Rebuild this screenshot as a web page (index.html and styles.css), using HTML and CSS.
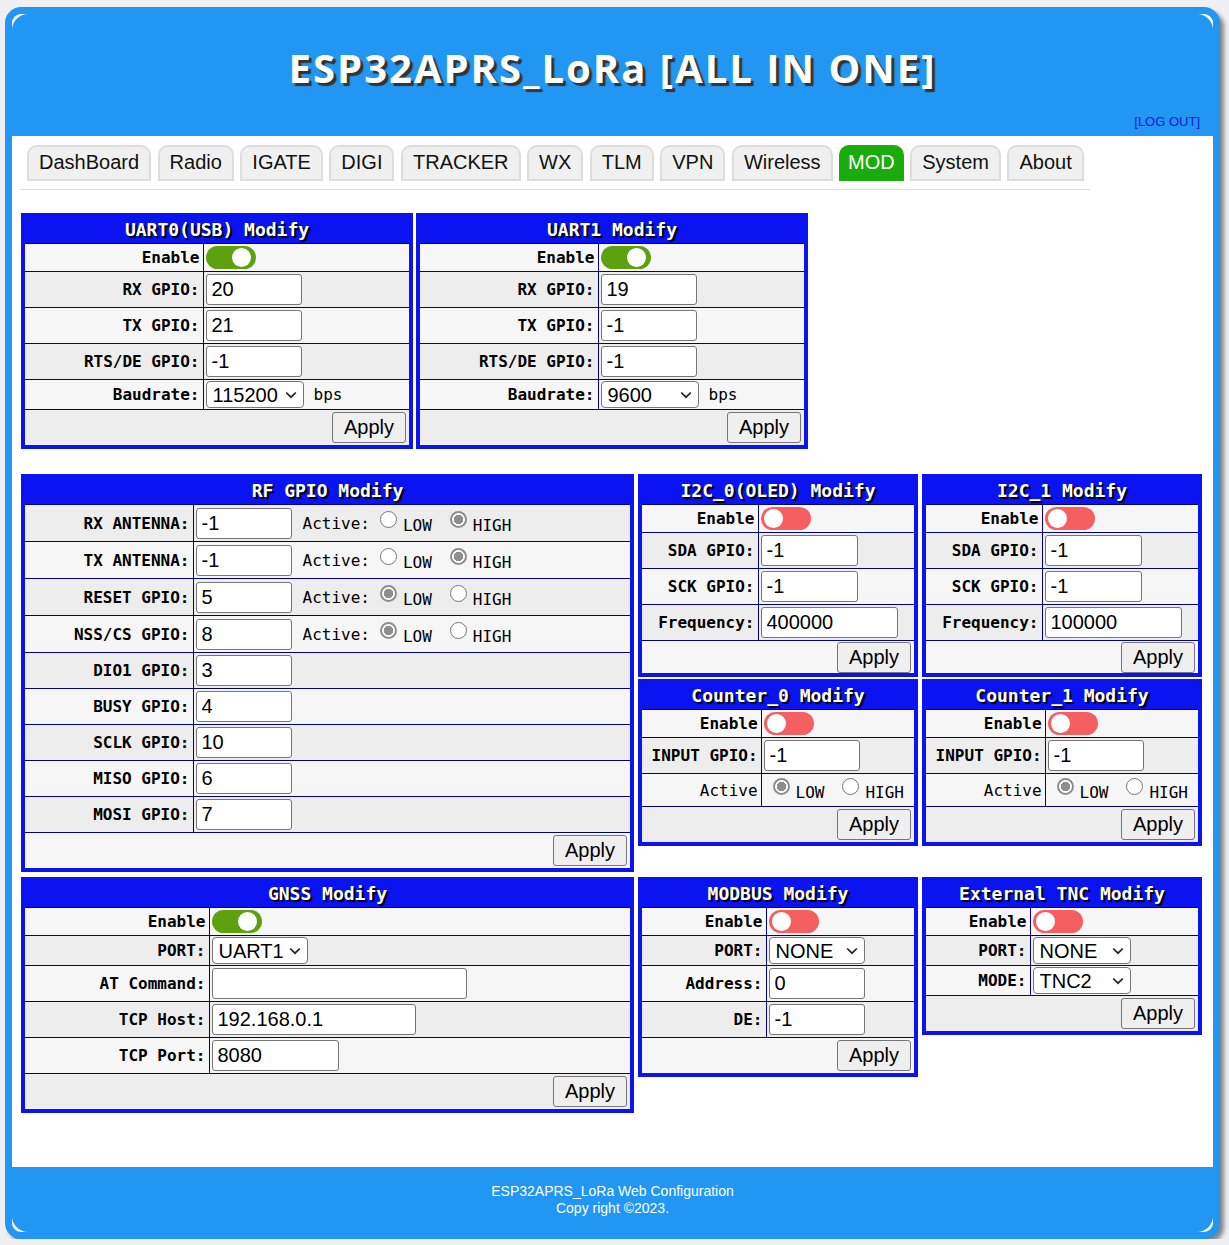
FILE: index.html
```html
<!DOCTYPE html>
<html>
<head>
<meta charset="utf-8">
<title>ESP32APRS_LoRa MOD</title>
<link rel="stylesheet" href="styles.css">
</head>
<body>
<div class="page">
  <header class="hdr">
    <h1 class="title">ESP32APRS_LoRa [ALL IN ONE]</h1>
    <div class="logout"><a href="#">[LOG OUT]</a></div>
  </header>
  <main class="main">
    <ul class="tabs">
      <li class="tab">DashBoard</li>
      <li class="tab">Radio</li>
      <li class="tab">IGATE</li>
      <li class="tab">DIGI</li>
      <li class="tab">TRACKER</li>
      <li class="tab">WX</li>
      <li class="tab">TLM</li>
      <li class="tab">VPN</li>
      <li class="tab">Wireless</li>
      <li class="tab active">MOD</li>
      <li class="tab">System</li>
      <li class="tab">About</li>
    </ul>

    <div class="row row1">
      <div class="box half">
        <table class="tbl t-uart">
          <thead><tr><th colspan="2" class="ttl">UART0(USB) Modify</th></tr></thead>
          <tbody>
            <tr class="r-en"><td class="lbl">Enable</td><td class="val"><span class="sw on"></span></td></tr>
            <tr class="r-in"><td class="lbl">RX GPIO:</td><td class="val"><input class="inp w96" value="20"></td></tr>
            <tr class="r-in"><td class="lbl">TX GPIO:</td><td class="val"><input class="inp w96" value="21"></td></tr>
            <tr class="r-in"><td class="lbl">RTS/DE GPIO:</td><td class="val"><input class="inp w96" value="-1"></td></tr>
            <tr class="r-sel"><td class="lbl">Baudrate:</td><td class="val"><select class="sel w98"><option>115200</option></select><span class="unit">bps</span></td></tr>
            <tr class="r-ap"><td colspan="2" class="ap"><button class="btn">Apply</button></td></tr>
          </tbody>
        </table>
      </div>
      <div class="box half">
        <table class="tbl t-uart">
          <thead><tr><th colspan="2" class="ttl">UART1 Modify</th></tr></thead>
          <tbody>
            <tr class="r-en"><td class="lbl">Enable</td><td class="val"><span class="sw on"></span></td></tr>
            <tr class="r-in"><td class="lbl">RX GPIO:</td><td class="val"><input class="inp w96" value="19"></td></tr>
            <tr class="r-in"><td class="lbl">TX GPIO:</td><td class="val"><input class="inp w96" value="-1"></td></tr>
            <tr class="r-in"><td class="lbl">RTS/DE GPIO:</td><td class="val"><input class="inp w96" value="-1"></td></tr>
            <tr class="r-sel"><td class="lbl">Baudrate:</td><td class="val"><select class="sel w98"><option>9600</option></select><span class="unit">bps</span></td></tr>
            <tr class="r-ap"><td colspan="2" class="ap"><button class="btn">Apply</button></td></tr>
          </tbody>
        </table>
      </div>
    </div>

    <div class="row row2">
      <div class="box wide">
        <table class="tbl t-rf">
          <thead><tr><th colspan="2" class="ttl">RF GPIO Modify</th></tr></thead>
          <tbody>
            <tr class="r-rad"><td class="lbl">RX ANTENNA:</td><td class="val"><input class="inp w96" value="-1"><span class="act">Active:</span><input type="radio" class="rad" name="rxa"><span class="opt">LOW</span><input type="radio" class="rad" name="rxa" checked><span class="opt">HIGH</span></td></tr>
            <tr class="r-rad"><td class="lbl">TX ANTENNA:</td><td class="val"><input class="inp w96" value="-1"><span class="act">Active:</span><input type="radio" class="rad" name="txa"><span class="opt">LOW</span><input type="radio" class="rad" name="txa" checked><span class="opt">HIGH</span></td></tr>
            <tr class="r-rad"><td class="lbl">RESET GPIO:</td><td class="val"><input class="inp w96" value="5"><span class="act">Active:</span><input type="radio" class="rad" name="rst" checked><span class="opt">LOW</span><input type="radio" class="rad" name="rst"><span class="opt">HIGH</span></td></tr>
            <tr class="r-rad"><td class="lbl">NSS/CS GPIO:</td><td class="val"><input class="inp w96" value="8"><span class="act">Active:</span><input type="radio" class="rad" name="nss" checked><span class="opt">LOW</span><input type="radio" class="rad" name="nss"><span class="opt">HIGH</span></td></tr>
            <tr class="r-in"><td class="lbl">DIO1 GPIO:</td><td class="val"><input class="inp w96" value="3"></td></tr>
            <tr class="r-in"><td class="lbl">BUSY GPIO:</td><td class="val"><input class="inp w96" value="4"></td></tr>
            <tr class="r-in"><td class="lbl">SCLK GPIO:</td><td class="val"><input class="inp w96" value="10"></td></tr>
            <tr class="r-in"><td class="lbl">MISO GPIO:</td><td class="val"><input class="inp w96" value="6"></td></tr>
            <tr class="r-in"><td class="lbl">MOSI GPIO:</td><td class="val"><input class="inp w96" value="7"></td></tr>
            <tr class="r-ap"><td colspan="2" class="ap"><button class="btn">Apply</button></td></tr>
          </tbody>
        </table>
      </div>
      <div class="col">
        <div class="box narrow">
          <table class="tbl t-i2c">
            <thead><tr><th colspan="2" class="ttl">I2C_0(OLED) Modify</th></tr></thead>
            <tbody>
              <tr class="r-en"><td class="lbl">Enable</td><td class="val"><span class="sw off"></span></td></tr>
              <tr class="r-in"><td class="lbl">SDA GPIO:</td><td class="val"><input class="inp w97" value="-1"></td></tr>
              <tr class="r-in"><td class="lbl">SCK GPIO:</td><td class="val"><input class="inp w97" value="-1"></td></tr>
              <tr class="r-in"><td class="lbl">Frequency:</td><td class="val"><input class="inp w137" value="400000"></td></tr>
              <tr class="r-ap"><td colspan="2" class="ap"><button class="btn">Apply</button></td></tr>
            </tbody>
          </table>
        </div>
        <div class="box narrow">
          <table class="tbl t-cnt">
            <thead><tr><th colspan="2" class="ttl">Counter_0 Modify</th></tr></thead>
            <tbody>
              <tr class="r-en"><td class="lbl">Enable</td><td class="val"><span class="sw off"></span></td></tr>
              <tr class="r-in"><td class="lbl">INPUT GPIO:</td><td class="val"><input class="inp w96" value="-1"></td></tr>
              <tr class="r-act"><td class="lbl plain">Active</td><td class="val"><input type="radio" class="rad first" name="c0" checked><span class="opt">LOW</span><input type="radio" class="rad" name="c0"><span class="opt">HIGH</span></td></tr>
              <tr class="r-ap"><td colspan="2" class="ap"><button class="btn">Apply</button></td></tr>
            </tbody>
          </table>
        </div>
      </div>
      <div class="col">
        <div class="box narrow">
          <table class="tbl t-i2c">
            <thead><tr><th colspan="2" class="ttl">I2C_1 Modify</th></tr></thead>
            <tbody>
              <tr class="r-en"><td class="lbl">Enable</td><td class="val"><span class="sw off"></span></td></tr>
              <tr class="r-in"><td class="lbl">SDA GPIO:</td><td class="val"><input class="inp w97" value="-1"></td></tr>
              <tr class="r-in"><td class="lbl">SCK GPIO:</td><td class="val"><input class="inp w97" value="-1"></td></tr>
              <tr class="r-in"><td class="lbl">Frequency:</td><td class="val"><input class="inp w137" value="100000"></td></tr>
              <tr class="r-ap"><td colspan="2" class="ap"><button class="btn">Apply</button></td></tr>
            </tbody>
          </table>
        </div>
        <div class="box narrow">
          <table class="tbl t-cnt">
            <thead><tr><th colspan="2" class="ttl">Counter_1 Modify</th></tr></thead>
            <tbody>
              <tr class="r-en"><td class="lbl">Enable</td><td class="val"><span class="sw off"></span></td></tr>
              <tr class="r-in"><td class="lbl">INPUT GPIO:</td><td class="val"><input class="inp w96" value="-1"></td></tr>
              <tr class="r-act"><td class="lbl plain">Active</td><td class="val"><input type="radio" class="rad first" name="c1" checked><span class="opt">LOW</span><input type="radio" class="rad" name="c1"><span class="opt">HIGH</span></td></tr>
              <tr class="r-ap"><td colspan="2" class="ap"><button class="btn">Apply</button></td></tr>
            </tbody>
          </table>
        </div>
      </div>
    </div>

    <div class="row row3">
      <div class="box wide">
        <table class="tbl t-gnss">
          <thead><tr><th colspan="2" class="ttl">GNSS Modify</th></tr></thead>
          <tbody>
            <tr class="r-en"><td class="lbl">Enable</td><td class="val"><span class="sw on"></span></td></tr>
            <tr class="r-sel"><td class="lbl">PORT:</td><td class="val"><select class="sel w96"><option>UART1</option></select></td></tr>
            <tr class="r-in"><td class="lbl">AT Command:</td><td class="val"><input class="inp w255" value=""></td></tr>
            <tr class="r-in"><td class="lbl">TCP Host:</td><td class="val"><input class="inp w204" value="192.168.0.1"></td></tr>
            <tr class="r-in"><td class="lbl">TCP Port:</td><td class="val"><input class="inp w127" value="8080"></td></tr>
            <tr class="r-ap"><td colspan="2" class="ap"><button class="btn">Apply</button></td></tr>
          </tbody>
        </table>
      </div>
      <div class="box narrow">
        <table class="tbl t-mod">
          <thead><tr><th colspan="2" class="ttl">MODBUS Modify</th></tr></thead>
          <tbody>
            <tr class="r-en"><td class="lbl">Enable</td><td class="val"><span class="sw off"></span></td></tr>
            <tr class="r-sel"><td class="lbl">PORT:</td><td class="val"><select class="sel w96"><option>NONE</option></select></td></tr>
            <tr class="r-in"><td class="lbl">Address:</td><td class="val"><input class="inp w96" value="0"></td></tr>
            <tr class="r-in"><td class="lbl">DE:</td><td class="val"><input class="inp w96" value="-1"></td></tr>
            <tr class="r-ap"><td colspan="2" class="ap"><button class="btn">Apply</button></td></tr>
          </tbody>
        </table>
      </div>
      <div class="box narrow">
        <table class="tbl t-tnc">
          <thead><tr><th colspan="2" class="ttl">External TNC Modify</th></tr></thead>
          <tbody>
            <tr class="r-en"><td class="lbl">Enable</td><td class="val"><span class="sw off"></span></td></tr>
            <tr class="r-sel"><td class="lbl">PORT:</td><td class="val"><select class="sel w98"><option>NONE</option></select></td></tr>
            <tr class="r-sel"><td class="lbl">MODE:</td><td class="val"><select class="sel w98"><option>TNC2</option></select></td></tr>
            <tr class="r-ap"><td colspan="2" class="ap"><button class="btn">Apply</button></td></tr>
          </tbody>
        </table>
      </div>
    </div>
  </main>
  <footer class="ftr">
    <div>ESP32APRS_LoRa Web Configuration</div>
    <div>Copy right ©2023.</div>
  </footer>
</div>
</body>
</html>
```

FILE: styles.css
```css
* { box-sizing: border-box; }
html, body { margin: 0; background: #eef0f4; }
body { font-family: "Liberation Sans", Arial, sans-serif; color: #000; }

.page {
  margin: 7px 9px 0 5px;
  border: 7px solid #2196f3;
  border-radius: 16px;
  background: #fff;
  box-shadow: 4px 4px 4px rgba(0, 0, 0, 0.45);
}

.hdr {
  background: #2196f3;
  border-radius: 16px 16px 0 0;
  height: 122px;
  padding: 26px 13px 0;
  text-align: center;
}
.title {
  margin: 0;
  font: bold 40px/56px "Open Sans", "DejaVu Sans", sans-serif;
  letter-spacing: 2px;
  color: #fff;
  text-shadow: 3px 3px 1px #333;
}
.logout {
  margin-top: 18px;
  text-align: right;
  font-size: 13px;
  line-height: 16px;
}
.logout a { color: #1a1acc; text-decoration: none; }

.main { padding: 9px 0 54px 9px; }

.tabs {
  display: flex;
  width: fit-content;
  gap: 6.5px;
  list-style: none;
  margin: 0 0 23px -1px;
  padding: 0 6px 8px 7px;
  border-bottom: 1px solid #ddd;
}
.tab {
  font-size: 20px;
  line-height: 23px;
  padding: 4px 10px 5px;
  border: 2px solid #ddd;
  border-radius: 10px 10px 0 0;
  background: #f0f0f0;
  color: #111;
}
.tab.active {
  background: #1aab0d;
  border: none;
  padding: 6px 9px 5px;
  color: #fff;
}

.row { display: flex; align-items: flex-start; }
.row1 { gap: 3px; margin-bottom: 25px; }
.row2 { gap: 4px; margin-bottom: 5px; }
.row3 { gap: 4px; }
.col { display: flex; flex-direction: column; gap: 2px; }

.box { border: 3px solid #0b14f0; background: #0b14f0; padding: 1px; }
.half { width: 392px; }
.wide { width: 613px; }
.narrow { width: 280px; }

.tbl { width: 100%; border-collapse: collapse; }
.ttl {
  height: 26px;
  padding: 0;
  font: bold 18px/26px "DejaVu Sans Mono", monospace;
  color: #fff;
  text-shadow: 2px 2px 1px #000;
  text-align: center;
  background: #0b14f0;
}
.tbl td { border-top: 1px solid #000080; padding: 2px; }
.tbl tbody tr:nth-child(odd) { background: #f6f6f6; }
.tbl tbody tr:nth-child(even) { background: #ededed; }
.t-rf tbody tr:nth-child(odd) { background: #ededed; }
.t-rf tbody tr:nth-child(even) { background: #f6f6f6; }

.tbl td.lbl {
  text-align: right;
  font: bold 16px "DejaVu Sans Mono", monospace;
  padding: 0 3px 0 2px;
  border-right: 1px solid #000080;
  white-space: nowrap;
}
.tbl td.plain { font-weight: normal; }
.t-uart .lbl { width: 178px; }
.t-rf .lbl { width: 168px; }
.t-i2c .lbl { width: 116px; }
.t-cnt .lbl { width: 120px; }
.t-gnss .lbl { width: 184px; }
.t-mod .lbl { width: 124px; }
.t-tnc .lbl { width: 104px; }

.r-en { height: 27px; }
.r-in { height: 36px; }
.r-rad { height: 37px; }
.r-sel { height: 30px; }
.r-ap { height: 35px; }
.r-act { height: 33px; }
.tbl .r-sel td { padding-top: 1px; padding-bottom: 1px; }
.t-i2c .r-ap { height: 32px; }
.tbl.t-i2c td.ap { padding-top: 1px; padding-bottom: 0; }
.t-rf .r-ap { height: 34px; }

.val { white-space: nowrap; }

.sw {
  display: block;
  position: relative;
  width: 50px;
  height: 23px;
  border-radius: 12px;
}
.sw.on { background: #5ea10f; }
.sw.off { background: #f65f5f; }
.sw::after {
  content: "";
  position: absolute;
  top: 2px;
  width: 19px;
  height: 19px;
  border-radius: 50%;
  background: #fff;
}
.sw.on::after { right: 5px; }
.sw.off::after { left: 3px; }

.inp {
  height: 31px;
  border: 1px solid #767676;
  border-radius: 3px;
  padding: 0 5px;
  font: 20px "Liberation Sans", Arial, sans-serif;
  background: #fff;
  color: #000;
  vertical-align: middle;
}
.w96 { width: 96px; }
.w97 { width: 97px; }
.w98 { width: 98px; }
.w127 { width: 127px; }
.w137 { width: 137px; }
.w204 { width: 204px; }
.w255 { width: 255px; }

.sel {
  appearance: none;
  -webkit-appearance: none;
  height: 27px;
  font: 20px "Liberation Sans", Arial, sans-serif;
  border: 1px solid #767676;
  border-radius: 4px;
  background-color: #fff;
  background-image: url("data:image/svg+xml;utf8,<svg xmlns='http://www.w3.org/2000/svg' width='12' height='8' viewBox='0 0 12 8'><path d='M1.2 1.5 L6 6.2 L10.8 1.5' fill='none' stroke='%23222' stroke-width='1.7'/></svg>");
  background-repeat: no-repeat;
  background-position: right 6px center;
  background-size: 12px 8px;
  color: #000;
  padding: 0 20px 0 6px;
  vertical-align: middle;
}
.unit {
  font: 16px "DejaVu Sans Mono", monospace;
  margin-left: 10px;
  vertical-align: middle;
}

.tbl td.ap { text-align: right; padding: 2px 3px 2px 2px; }
.btn {
  height: 31px;
  font: 20px "Liberation Sans", Arial, sans-serif;
  padding: 0 11px;
  border: 1px solid #767676;
  border-radius: 3px;
  background: #efefef;
  color: #000;
}

.act {
  font: 16px "DejaVu Sans Mono", monospace;
  margin-left: 11px;
  vertical-align: middle;
}
.rad {
  appearance: none;
  -webkit-appearance: none;
  width: 17px;
  height: 17px;
  margin: 0 6px 0 10px;
  border: 1px solid #767676;
  border-radius: 50%;
  background: #fff;
  vertical-align: -1px;
}
.rad:checked {
  border: 2px solid #8e8e8e;
  background: radial-gradient(circle, #8e8e8e 0 4.5px, #fff 5px);
}
.rad.first { margin-left: 9px; }
.opt {
  font: 16px "DejaVu Sans Mono", monospace;
  margin-right: 8px;
  vertical-align: -4px;
}

.ftr {
  background: #2196f3;
  border-radius: 0 0 16px 16px;
  padding: 16px 0 15px;
  text-align: center;
  color: #fff;
  font: 14px/17px "Liberation Sans", Arial, sans-serif;
}
```
